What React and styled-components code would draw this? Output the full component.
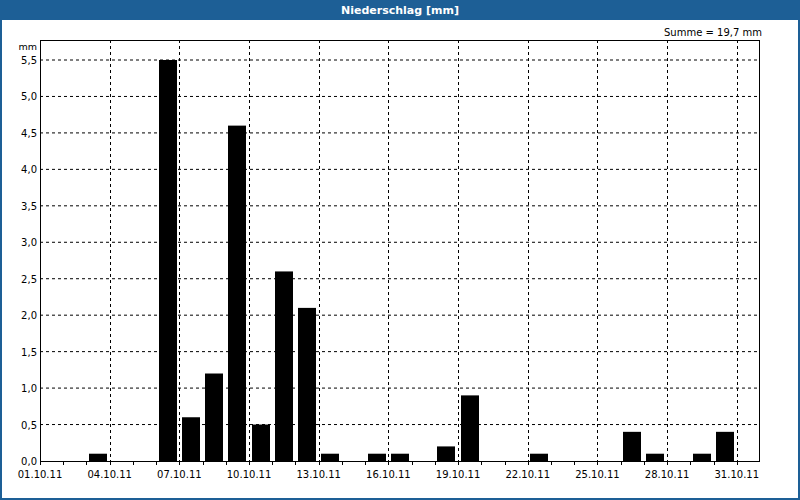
import React from "react";
import styled, { createGlobalStyle } from "styled-components";

const Global = createGlobalStyle`
  html, body { margin: 0; padding: 0; background: #fff; }
  body { font-family: "DejaVu Sans", Verdana, sans-serif; }
`;

const Frame = styled.div`
  width: 800px; height: 500px; box-sizing: border-box;
  display: flex; flex-direction: column;
  border: 2px solid #1d5f96; border-top: none; background: #fff;
`;
const TitleBar = styled.div`
  height: 20px; margin: 0 -2px; background: #1d5f96; color: #fff;
  display: flex; align-items: center; justify-content: center;
  font: bold 11px "DejaVu Sans", Verdana, sans-serif;
`;
const Chart = styled.svg`
  display: block; flex: 1;
  font-family: "DejaVu Sans", Verdana, sans-serif; font-size: 10px;
`;

const L = 40, R = 760, T = 40, B = 461;
const Y0 = 461, PER = (461 - 60) / 5.5;
const W = 720 / 31;
const bars = { 2: 0.1, 5: 5.5, 6: 0.6, 7: 1.2, 8: 4.6, 9: 0.5, 10: 2.6, 11: 2.1, 12: 0.1, 14: 0.1, 15: 0.1, 17: 0.2, 18: 0.9, 21: 0.1, 25: 0.4, 26: 0.1, 28: 0.1, 29: 0.4 };

export default function App() {
  const yTicks = Array.from({ length: 12 }, (_, i) => i * 0.5);
  const xLabels = Array.from({ length: 11 }, (_, i) => i * 3);
  return (
    <>
      <Global />
      <Frame>
        <TitleBar>Niederschlag [mm]</TitleBar>
        <Chart viewBox="2 20 796 478" width="796" height="478">
          {yTicks.slice(1).map(v => {
            const y = Y0 - v * PER;
            return <line key={v} x1={L} x2={R} y1={y} y2={y} stroke="#000" strokeDasharray="3 3" />;
          })}
          {xLabels.slice(1).map(d => {
            const x = Math.round(L + d * W) + 0.5;
            return <line key={d} x1={x} x2={x} y1={T} y2={B} stroke="#000" strokeDasharray="3 3" />;
          })}
          {Object.entries(bars).map(([i, v]) => (
            <rect key={i} x={Math.round(L + i * W + 2.5)} y={Y0 - v * PER} width={18} height={v * PER} fill="#000" />
          ))}
          <rect x={L + 0.5} y={T + 0.5} width={R - L - 1} height={B - T} fill="none" stroke="#000" />
          {Array.from({ length: 31 }, (_, i) => {
            const x = Math.round(L + i * W) + 0.5;
            return <line key={i} x1={x} x2={x} y1={B} y2={B + 4} stroke="#000" />;
          })}
          {yTicks.map(v => (
            <text key={v} x={37} y={Y0 - v * PER + 4} textAnchor="end">{v.toFixed(1).replace(".", ",")}</text>
          ))}
          <text x={37} y={50} textAnchor="end" fontSize="9.5">mm</text>
          {xLabels.map(d => (
            <text key={d} x={L + d * W} y={478} textAnchor="middle">
              {String(d + 1).padStart(2, "0")}.10.11
            </text>
          ))}
          <text x={762} y={36} textAnchor="end">Summe = 19,7 mm</text>
        </Chart>
      </Frame>
    </>
  );
}
